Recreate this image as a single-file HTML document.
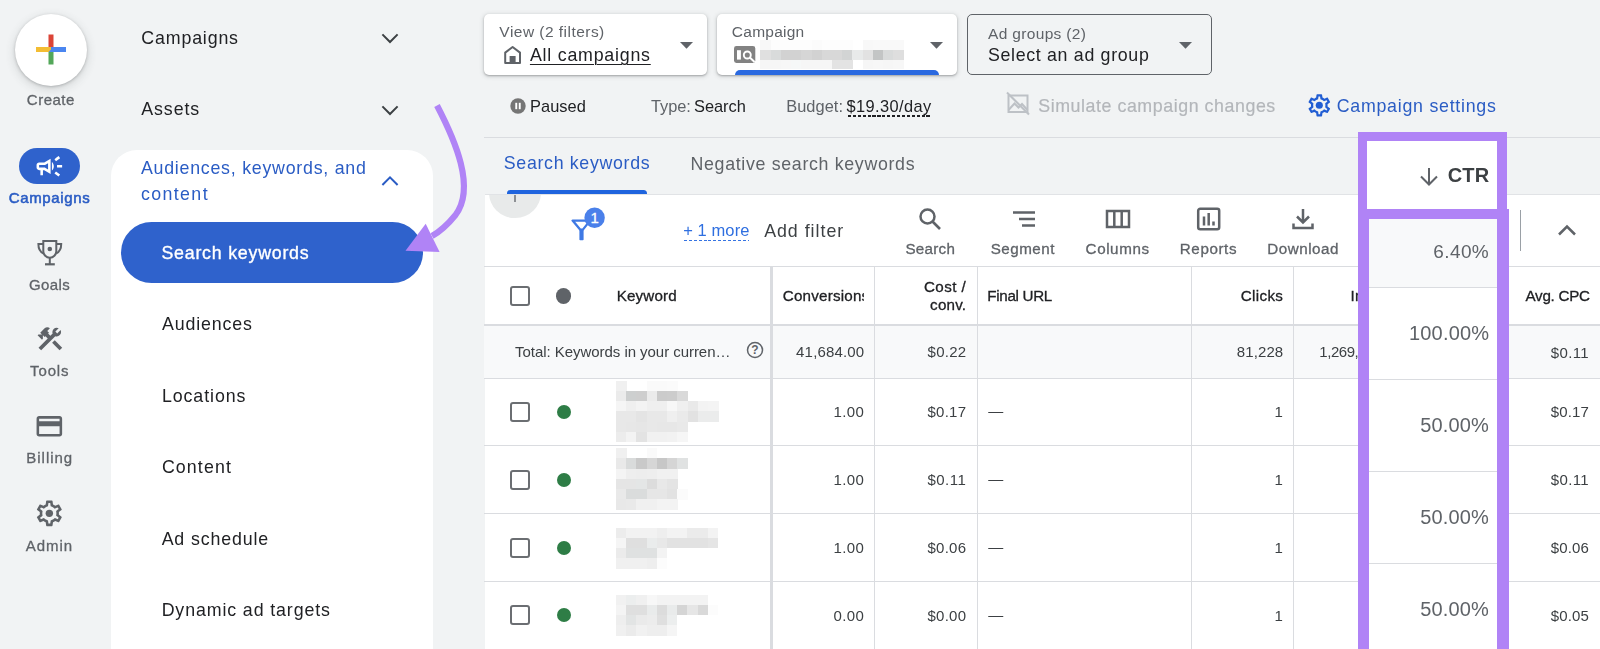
<!DOCTYPE html>
<html><head><meta charset="utf-8">
<style>
*{box-sizing:border-box;margin:0;padding:0}
html,body{width:1600px;height:649px;overflow:hidden;background:#f1f3f4;font-family:"Liberation Sans",sans-serif;color:#202124}
.abs{position:absolute}
#root{position:relative;width:1600px;height:649px;overflow:hidden;background:#f1f3f4}
.t{position:absolute;white-space:nowrap;line-height:1}
/* rail */
.rail-l{position:absolute;left:0;width:100px;text-align:center;font-size:15px;color:#5f6368;letter-spacing:.3px;line-height:1}
/* nav */
.nav{position:absolute;font-size:17.5px;color:#202124;letter-spacing:.35px;line-height:1;white-space:nowrap}
/* table */
.hl{position:absolute;height:1px;background:#dadce0}
.vl{position:absolute;width:1px;background:#dadce0}
.cell{position:absolute;font-size:14px;color:#3c4043;line-height:1;white-space:nowrap}
.r{text-align:right}
.hd{position:absolute;font-size:14px;color:#202124;line-height:1;white-space:nowrap;font-weight:bold}
.cb{position:absolute;width:20px;height:20px;border:2.4px solid #6b6e72;border-radius:3px;background:#fff}
.dot{position:absolute;width:14px;height:14px;border-radius:50%;background:#2e7d46}
.tb{position:absolute;font-size:14.5px;color:#5f6368;line-height:1;text-align:center;letter-spacing:.4px}
.blur{position:absolute;background:#ececec}
</style></head><body><div id="root">

<!-- LEFT RAIL -->
<div class="abs" style="left:15px;top:14px;width:72px;height:72px;border-radius:50%;background:#fff;box-shadow:0 1px 3px rgba(60,64,67,.3),0 3px 8px 2px rgba(60,64,67,.12)"></div>
<svg class="abs" style="left:36px;top:34px" width="30" height="31" viewBox="0 0 30 31">
 <rect x="12.5" y="0.5" width="5" height="15" fill="#db4437"/>
 <rect x="12.5" y="15.5" width="5" height="15" fill="#53a759"/>
 <rect x="0" y="13" width="15" height="5" fill="#f3bd33"/>
 <rect x="15" y="13" width="15" height="5" fill="#4a86f0"/>
 <path d="M12.5 18 L17.5 13 L17.5 18 Z" fill="#4a86f0"/>
</svg>

<div class="abs" style="left:19px;top:148px;width:61px;height:36px;border-radius:18px;background:#2f62cc"></div>

<!-- SECOND NAV -->
<div class="abs" style="left:111px;top:150px;width:322px;height:520px;background:#fff;border-radius:26px 26px 0 0"></div>
<div class="abs" style="left:121px;top:222px;width:302px;height:61px;border-radius:31px;background:#2f62cc"></div>


<!-- TOP SELECTORS -->
<div class="abs" style="left:484px;top:14px;width:223px;height:61px;background:#fff;border-radius:5px;box-shadow:0 1px 2px rgba(60,64,67,.35),0 1px 4px 1px rgba(60,64,67,.15)"></div>
<div class="abs" style="left:717px;top:14px;width:240px;height:61px;background:#fff;border-radius:5px;box-shadow:0 1px 2px rgba(60,64,67,.35),0 1px 4px 1px rgba(60,64,67,.15);overflow:hidden"><div class="abs" style="left:18px;top:56.3px;width:203.5px;height:10px;border-radius:5px;background:#2a69e0"></div></div>
<div class="abs" style="left:967px;top:14px;width:245px;height:61px;border:1px solid #5f6368;border-radius:5px"></div>

<!-- ICONS -->
<svg class="abs" style="left:34.4px;top:150.7px" width="30.7" height="30.7" viewBox="0 0 24 24"><path d="M18 11v2h4v-2h-4zM16 17.61c.96.71 2.21 1.65 3.2 2.39.4-.53.8-1.07 1.2-1.6-.99-.74-2.24-1.68-3.2-2.4-.4.54-.8 1.08-1.2 1.61zM20.4 5.6c-.4-.53-.8-1.07-1.2-1.6-.99.74-2.24 1.68-3.2 2.4.4.53.8 1.07 1.2 1.6.96-.72 2.21-1.65 3.2-2.4zM4 9c-1.1 0-2 .9-2 2v2c0 1.1.9 2 2 2h1v4h2v-4h1l5 3V6L8 9H4zm5.03 1.71L11 9.53v4.94l-1.97-1.18-.48-.29H4v-2h4.55l.48-.29zM15.5 12c0-1.33-.58-2.53-1.5-3.35v6.69c.92-.81 1.5-2.01 1.5-3.34z" fill="#fff"/></svg>
<svg class="abs" style="left:36px;top:239px" width="28" height="28" viewBox="0 0 28 28" fill="none" stroke="#5f6368" stroke-width="2"><path d="M7.3 2.1H20.3V12.2a6.5 6.5 0 0 1 -13 0Z"/><path d="M13.8 18.7V25.3"/><path d="M9 25.3H18.8" stroke-width="2.2"/><path d="M7.3 5H2.4C2.4 9.2 4 12.8 7.3 14.3"/><path d="M20.3 5H25.2C25.2 9.2 23.6 12.8 20.3 14.3"/><circle cx="13.8" cy="10" r="2.3" fill="#5f6368" stroke="none"/></svg>
<svg class="abs" style="left:34.6px;top:324.4px" width="29.8" height="29.8" viewBox="0 0 24 24" fill="#5f6368"><rect height="8.48" transform="matrix(0.7071 -0.7071 0.7071 0.7071 -6.8717 17.6255)" width="3" x="16.34" y="12.87"/><path d="M17.5,10c1.93,0,3.5-1.57,3.5-3.5c0-0.58-0.16-1.12-0.41-1.6l-2.7,2.7L16.4,6.11l2.7-2.7C18.62,3.16,18.08,3,17.5,3 C15.57,3,14,4.57,14,6.5c0,0.41,0.08,0.8,0.21,1.16l-1.85,1.85l-1.78-1.78l0.71-0.71L9.88,5.61L12,3.49 c-1.17-1.17-3.07-1.17-4.24,0L4.22,7.03l1.41,1.41H2.81L2.1,9.15l3.54,3.54l0.71-0.71V9.15l1.41,1.41l0.71-0.71l1.78,1.78 l-7.41,7.41l2.12,2.12L16.34,9.79C16.7,9.92,17.09,10,17.5,10z"/></svg>
<svg class="abs" style="left:34.4px;top:411px" width="30.7" height="30.7" viewBox="0 0 24 24"><path d="M20 4H4c-1.11 0-1.99.89-1.99 2L2 18c0 1.11.89 2 2 2h16c1.11 0 2-.89 2-2V6c0-1.11-.89-2-2-2zm0 14H4v-6h16v6zm0-10H4V6h16v2z" fill="#5f6368"/></svg>
<svg class="abs" style="left:34.4px;top:498px" width="30.7" height="30.7" viewBox="0 0 24 24"><path d="M19.43 12.98c.04-.32.07-.64.07-.98 0-.34-.03-.66-.07-.98l2.11-1.65c.19-.15.24-.42.12-.64l-2-3.46c-.09-.16-.26-.25-.44-.25-.06 0-.12.01-.17.03l-2.49 1c-.52-.4-1.08-.73-1.69-.98l-.38-2.65C14.46 2.18 14.25 2 14 2h-4c-.25 0-.46.18-.49.42l-.38 2.65c-.61.25-1.17.59-1.69.98l-2.49-1c-.06-.02-.12-.03-.18-.03-.17 0-.34.09-.43.25l-2 3.46c-.13.22-.07.49.12.64l2.11 1.65c-.04.32-.07.65-.07.98 0 .33.03.66.07.98l-2.11 1.65c-.19.15-.24.42-.12.64l2 3.46c.09.16.26.25.44.25.06 0 .12-.01.17-.03l2.49-1c.52.4 1.08.73 1.69.98l.38 2.65c.03.24.24.42.49.42h4c.25 0 .46-.18.49-.42l.38-2.65c.61-.25 1.17-.59 1.69-.98l2.49 1c.06.02.12.03.18.03.17 0 .34-.09.43-.25l2-3.46c.12-.22.07-.49-.12-.64l-2.11-1.65zm-1.98-1.71c.04.31.05.52.05.73 0 .21-.02.43-.05.73l-.14 1.13.89.7 1.08.84-.7 1.21-1.27-.51-1.04-.42-.9.68c-.43.32-.84.56-1.25.73l-1.06.43-.16 1.13-.2 1.35h-1.4l-.19-1.35-.16-1.13-1.06-.43c-.43-.18-.83-.41-1.23-.71l-.91-.7-1.06.43-1.27.51-.7-1.21 1.08-.84.89-.7-.14-1.13c-.03-.31-.05-.54-.05-.74s.02-.43.05-.73l.14-1.13-.89-.7-1.08-.84.7-1.21 1.27.51 1.04.42.9-.68c.43-.32.84-.56 1.25-.73l1.06-.43.16-1.13.2-1.35h1.39l.19 1.35.16 1.13 1.06.43c.43.18.83.41 1.23.71l.91.7 1.06-.43 1.27-.51.7 1.21-1.07.85-.89.7.14 1.13z" fill="#5f6368"/><circle cx="12" cy="12" r="2.9" fill="#5f6368"/></svg>
<!-- chevrons -->
<svg class="abs" style="left:379px;top:30px" width="22" height="16" viewBox="0 0 22 16"><path d="M3.4 4.4L11 12L18.6 4.4" fill="none" stroke="#3c4043" stroke-width="2"/></svg>
<svg class="abs" style="left:379px;top:101.6px" width="22" height="16" viewBox="0 0 22 16"><path d="M3.4 4.4L11 12L18.6 4.4" fill="none" stroke="#3c4043" stroke-width="2"/></svg>
<svg class="abs" style="left:379px;top:173px" width="22" height="16" viewBox="0 0 22 16"><path d="M3.4 12L11 4.4L18.6 12" fill="none" stroke="#2a5cc4" stroke-width="2"/></svg>
<!-- purple arrow -->
<svg class="abs" style="left:390px;top:95px" width="100" height="170" viewBox="390 95 100 170"><path d="M437 105.5 C455 140 476 188 455.5 215 C449 223 441 231 432 236" fill="none" stroke="#b083f6" stroke-width="6.2" stroke-linecap="butt"/><path d="M405.5 250.7L425.7 223.8L439.6 252.1Z" fill="#b083f6"/></svg>
<!-- selector icons -->
<svg class="abs" style="left:502px;top:44px" width="22" height="22" viewBox="0 0 22 22"><path d="M3.2 19V8.6L10.6 3L18 8.6V19H3.2Z" fill="none" stroke="#5f6368" stroke-width="2" stroke-linejoin="round"/><rect x="7.6" y="12" width="6" height="7" fill="#5f6368"/></svg>
<svg class="abs" style="left:679.5px;top:41.8px" width="13" height="7"><path d="M0 0H13L6.5 6.8Z" fill="#5f6368"/></svg>
<svg class="abs" style="left:930px;top:41.8px" width="13" height="7"><path d="M0 0H13L6.5 6.8Z" fill="#5f6368"/></svg>
<svg class="abs" style="left:1179px;top:41.8px" width="13" height="7"><path d="M0 0H13L6.5 6.8Z" fill="#5f6368"/></svg>
<svg class="abs" style="left:734.3px;top:46.3px" width="22" height="18" viewBox="0 0 22 18"><rect x="0" y="0" width="21.3" height="17" rx="2.4" fill="#828282"/><rect x="3" y="4.2" width="3.9" height="9.4" fill="#fff"/><circle cx="13.3" cy="9" r="3.5" fill="none" stroke="#fff" stroke-width="1.9"/><path d="M15.8 11.6L20.6 16" stroke="#fff" stroke-width="2"/></svg>
<!-- blurred campaign name -->
<div class="blur" style="left:760.4px;top:40.0px;width:10.5px;height:10.4px;background:#f8f8f8"></div><div class="blur" style="left:770.6px;top:40.0px;width:10.5px;height:10.4px;background:#fdfdfd"></div><div class="blur" style="left:780.8px;top:40.0px;width:10.5px;height:10.4px;background:#fdfdfd"></div><div class="blur" style="left:791.1px;top:40.0px;width:10.5px;height:10.4px;background:#fdfdfd"></div><div class="blur" style="left:801.3px;top:40.0px;width:10.5px;height:10.4px;background:#fdfdfd"></div><div class="blur" style="left:811.5px;top:40.0px;width:10.5px;height:10.4px;background:#fbfbfb"></div><div class="blur" style="left:821.7px;top:40.0px;width:10.5px;height:10.4px;background:#fdfdfd"></div><div class="blur" style="left:831.9px;top:40.0px;width:10.5px;height:10.4px;background:#fdfdfd"></div><div class="blur" style="left:842.2px;top:40.0px;width:10.5px;height:10.4px;background:#fdfdfd"></div><div class="blur" style="left:862.6px;top:40.0px;width:10.5px;height:10.4px;background:#f8f8f8"></div><div class="blur" style="left:872.8px;top:40.0px;width:10.5px;height:10.4px;background:#f9f9f9"></div><div class="blur" style="left:883.0px;top:40.0px;width:10.5px;height:10.4px;background:#f9f9f9"></div><div class="blur" style="left:893.3px;top:40.0px;width:10.5px;height:10.4px;background:#f9f9f9"></div><div class="blur" style="left:760.4px;top:50.1px;width:10.5px;height:10.4px;background:#e0e0e0"></div><div class="blur" style="left:770.6px;top:50.1px;width:10.5px;height:10.4px;background:#d9dbdb"></div><div class="blur" style="left:780.8px;top:50.1px;width:10.5px;height:10.4px;background:#d2d2d2"></div><div class="blur" style="left:791.1px;top:50.1px;width:10.5px;height:10.4px;background:#d2d2d2"></div><div class="blur" style="left:801.3px;top:50.1px;width:10.5px;height:10.4px;background:#d6d6d6"></div><div class="blur" style="left:811.5px;top:50.1px;width:10.5px;height:10.4px;background:#d2d2d2"></div><div class="blur" style="left:821.7px;top:50.1px;width:10.5px;height:10.4px;background:#d8d8d8"></div><div class="blur" style="left:831.9px;top:50.1px;width:10.5px;height:10.4px;background:#d8d8d8"></div><div class="blur" style="left:842.2px;top:50.1px;width:10.5px;height:10.4px;background:#d2d4d4"></div><div class="blur" style="left:852.4px;top:50.1px;width:10.5px;height:10.4px;background:#e8eaea"></div><div class="blur" style="left:862.6px;top:50.1px;width:10.5px;height:10.4px;background:#e2e2e2"></div><div class="blur" style="left:872.8px;top:50.1px;width:10.5px;height:10.4px;background:#c3c5c5"></div><div class="blur" style="left:883.0px;top:50.1px;width:10.5px;height:10.4px;background:#d9dbdb"></div><div class="blur" style="left:893.3px;top:50.1px;width:10.5px;height:10.4px;background:#dedede"></div><div class="blur" style="left:760.4px;top:60.2px;width:10.5px;height:8.5px;background:#f6f6f6"></div><div class="blur" style="left:770.6px;top:60.2px;width:10.5px;height:8.5px;background:#f6f6f6"></div><div class="blur" style="left:780.8px;top:60.2px;width:10.5px;height:8.5px;background:#f7f7f7"></div><div class="blur" style="left:791.1px;top:60.2px;width:10.5px;height:8.5px;background:#f6f8f8"></div><div class="blur" style="left:801.3px;top:60.2px;width:10.5px;height:8.5px;background:#f6f6f6"></div><div class="blur" style="left:811.5px;top:60.2px;width:10.5px;height:8.5px;background:#f6f6f6"></div><div class="blur" style="left:821.7px;top:60.2px;width:10.5px;height:8.5px;background:#f6f6f6"></div><div class="blur" style="left:831.9px;top:60.2px;width:10.5px;height:8.5px;background:#e3e3e3"></div><div class="blur" style="left:842.2px;top:60.2px;width:10.5px;height:8.5px;background:#e3e3e3"></div><div class="blur" style="left:862.6px;top:60.2px;width:10.5px;height:8.5px;background:#f6f6f6"></div><div class="blur" style="left:872.8px;top:60.2px;width:10.5px;height:8.5px;background:#f7f7f7"></div><div class="blur" style="left:883.0px;top:60.2px;width:10.5px;height:8.5px;background:#f6f6f6"></div><div class="blur" style="left:893.3px;top:60.2px;width:10.5px;height:8.5px;background:#f7f7f7"></div>
<!-- pause -->
<svg class="abs" style="left:509.5px;top:98px" width="16" height="16" viewBox="0 0 16 16"><circle cx="8" cy="8" r="7.7" fill="#757575"/><rect x="5.3" y="4.8" width="1.9" height="6.4" fill="#fff"/><rect x="8.8" y="4.8" width="1.9" height="6.4" fill="#fff"/></svg>
<!-- simulate icon -->
<svg class="abs" style="left:1005px;top:91px" width="26" height="26" viewBox="0 0 26 26" fill="none" stroke="#bdc1c6" stroke-width="2"><path d="M3.5 4.5H22.5V21H3.5Z"/><path d="M2 1.5L24 23.5"/><path d="M3.5 19L9.5 12.5L13.5 16.5L17 13L22.5 19"/></svg>
<!-- blue gear -->
<svg class="abs" style="left:1305.6px;top:92.3px" width="26.6" height="26.6" viewBox="0 0 24 24"><path d="M19.43 12.98c.04-.32.07-.64.07-.98 0-.34-.03-.66-.07-.98l2.11-1.65c.19-.15.24-.42.12-.64l-2-3.46c-.09-.16-.26-.25-.44-.25-.06 0-.12.01-.17.03l-2.49 1c-.52-.4-1.08-.73-1.69-.98l-.38-2.65C14.46 2.18 14.25 2 14 2h-4c-.25 0-.46.18-.49.42l-.38 2.65c-.61.25-1.17.59-1.69.98l-2.49-1c-.06-.02-.12-.03-.18-.03-.17 0-.34.09-.43.25l-2 3.46c-.13.22-.07.49.12.64l2.11 1.65c-.04.32-.07.65-.07.98 0 .33.03.66.07.98l-2.11 1.65c-.19.15-.24.42-.12.64l2 3.46c.09.16.26.25.44.25.06 0 .12-.01.17-.03l2.49-1c.52.4 1.08.73 1.69.98l.38 2.65c.03.24.24.42.49.42h4c.25 0 .46-.18.49-.42l.38-2.65c.61-.25 1.17-.59 1.69-.98l2.49 1c.06.02.12.03.18.03.17 0 .34-.09.43-.25l2-3.46c.12-.22.07-.49-.12-.64l-2.11-1.65zm-1.98-1.71c.04.31.05.52.05.73 0 .21-.02.43-.05.73l-.14 1.13.89.7 1.08.84-.7 1.21-1.27-.51-1.04-.42-.9.68c-.43.32-.84.56-1.25.73l-1.06.43-.16 1.13-.2 1.35h-1.4l-.19-1.35-.16-1.13-1.06-.43c-.43-.18-.83-.41-1.23-.71l-.91-.7-1.06.43-1.27.51-.7-1.21 1.08-.84.89-.7-.14-1.13c-.03-.31-.05-.54-.05-.74s.02-.43.05-.73l.14-1.13-.89-.7-1.08-.84.7-1.21 1.27.51 1.04.42.9-.68c.43-.32.84-.56 1.25-.73l1.06-.43.16-1.13.2-1.35h1.39l.19 1.35.16 1.13 1.06.43c.43.18.83.41 1.23.71l.91.7 1.06-.43 1.27-.51.7 1.21-1.07.85-.89.7.14 1.13z" fill="#215dd3"/><circle cx="12" cy="12" r="3.2" fill="#215dd3"/></svg>


<!-- STATUS ROW -->
<div class="hl" style="left:484px;top:137px;width:1116px;background:#dadce0"></div>

<!-- TABS -->
<div class="abs" style="left:507.2px;top:189.8px;width:139.7px;height:4px;border-radius:3.5px 3.5px 0 0;background:#1f64de"></div>

<!-- TABLE AREA -->
<div class="abs" style="left:484.5px;top:193.5px;width:1116px;height:456px;background:#fff;border-top:1.2px solid #e1e3e6"></div>


<!-- grey circle peeking at top-left of table -->
<div class="abs" style="left:484.5px;top:194.7px;width:80px;height:30px;overflow:hidden"><div class="abs" style="left:4.9px;top:-28.2px;width:51.2px;height:51.2px;border-radius:50%;background:#e8eaea"></div><div class="abs" style="left:29.5px;top:0;width:2.2px;height:7.5px;background:#8d9094"></div></div>

<!-- toolbar -->
<svg class="abs" style="left:571.2px;top:206px" width="36" height="36" viewBox="0 0 36 36"><path d="M1.6 14.6 H19 L11.9 23.6 H9.1 Z" fill="none" stroke="#3f79e4" stroke-width="2.3" stroke-linejoin="round"/><rect x="8.4" y="23" width="4.2" height="11.2" rx="0.8" fill="#3f79e4"/><circle cx="23.6" cy="11.7" r="10.2" fill="#4a80ea"/><text x="23.6" y="17" font-family="Liberation Sans" font-size="15" fill="#fff" text-anchor="middle" stroke="#fff" stroke-width=".3">1</text></svg>

<svg class="abs" style="left:918px;top:207px" width="24" height="24" viewBox="0 0 24 24"><circle cx="9.5" cy="9.5" r="7" fill="none" stroke="#5f6368" stroke-width="2.5"/><path d="M14.5 14.5 L22 22" stroke="#5f6368" stroke-width="2.6"/></svg>
<svg class="abs" style="left:1011.7px;top:209px" width="24" height="20" viewBox="0 0 24 20"><path d="M1 3.5H23 M7 10H23 M10 16.5H23" stroke="#5f6368" stroke-width="2.5"/></svg>
<svg class="abs" style="left:1105px;top:208px" width="26" height="22" viewBox="0 0 26 22"><rect x="2" y="3" width="22" height="16" fill="none" stroke="#5f6368" stroke-width="2.5"/><path d="M9.3 3V19 M16.7 3V19" stroke="#5f6368" stroke-width="2.5"/></svg>
<svg class="abs" style="left:1196px;top:206px" width="26" height="26" viewBox="0 0 26 26"><rect x="2.2" y="2.8" width="21" height="20.5" rx="2" fill="none" stroke="#5f6368" stroke-width="2.5"/><path d="M8 10.5V19.6 M12.7 7V19.6 M17.5 15.6V19.6" stroke="#5f6368" stroke-width="2.5"/></svg>
<svg class="abs" style="left:1291px;top:207px" width="24" height="24" viewBox="0 0 24 24"><path d="M12 2V15 M6 9.5L12 15.5L18 9.5" fill="none" stroke="#5f6368" stroke-width="2.5"/><path d="M2.5 16.5V21H21.5V16.5" fill="none" stroke="#5f6368" stroke-width="2.5"/></svg>

<!-- total row bg -->
<div class="abs" style="left:484px;top:325px;width:1116px;height:53px;background:#f8f9fa"></div>
<!-- horizontal lines -->
<div class="hl" style="left:484px;top:266px;width:1116px"></div>
<div class="hl" style="left:484px;top:324px;width:1116px;height:2px"></div>
<div class="hl" style="left:484px;top:377.6px;width:1116px;height:1.3px"></div>
<div class="hl" style="left:484px;top:445px;width:1116px"></div>
<div class="hl" style="left:484px;top:513px;width:1116px"></div>
<div class="hl" style="left:484px;top:581px;width:1116px"></div>
<!-- vertical lines -->
<div class="vl" style="left:770px;top:267px;height:382px;width:3px;background:#dadce0"></div>
<div class="vl" style="left:874px;top:267px;height:382px"></div>
<div class="vl" style="left:977px;top:267px;height:382px"></div>
<div class="vl" style="left:1191px;top:267px;height:382px"></div>
<div class="vl" style="left:1293px;top:267px;height:382px"></div>

<!-- header -->
<div class="cb" style="left:510.2px;top:285.8px"></div>
<div class="abs" style="left:555.9px;top:288.2px;width:15.4px;height:15.4px;border-radius:50%;background:#5f6368"></div>

<!-- total row -->
<svg class="abs" style="left:746px;top:341px" width="18" height="18" viewBox="0 0 18 18"><circle cx="9" cy="9" r="7.5" fill="none" stroke="#5f6368" stroke-width="1.5"/><text x="9" y="13.3" font-family="Liberation Sans" font-size="12" font-weight="bold" fill="#5f6368" text-anchor="middle">?</text></svg>

<div class="cb" style="left:510.2px;top:402px"></div>
<div class="dot" style="left:556.6px;top:405px"></div>
<div class="cb" style="left:510.2px;top:470px"></div>
<div class="dot" style="left:556.6px;top:473px"></div>
<div class="cb" style="left:510.2px;top:537.5px"></div>
<div class="dot" style="left:556.6px;top:540.5px"></div>
<div class="cb" style="left:510.2px;top:605.2px"></div>
<div class="dot" style="left:556.6px;top:608.2px"></div>
<!-- blurred keywords -->
<div class="blur" style="left:616.0px;top:380.7px;width:10.5px;height:10.5px;background:#f0f0f0"></div><div class="blur" style="left:646.7px;top:380.7px;width:10.5px;height:10.5px;background:#fafafa"></div><div class="blur" style="left:656.9px;top:380.7px;width:10.5px;height:10.5px;background:#fafafa"></div><div class="blur" style="left:667.1px;top:380.7px;width:10.5px;height:10.5px;background:#fbfbfb"></div><div class="blur" style="left:616.0px;top:390.9px;width:10.5px;height:10.5px;background:#ebebeb"></div><div class="blur" style="left:626.2px;top:390.9px;width:10.5px;height:10.5px;background:#cdcfcf"></div><div class="blur" style="left:636.4px;top:390.9px;width:10.5px;height:10.5px;background:#cecece"></div><div class="blur" style="left:646.7px;top:390.9px;width:10.5px;height:10.5px;background:#ebebeb"></div><div class="blur" style="left:656.9px;top:390.9px;width:10.5px;height:10.5px;background:#cbcbcb"></div><div class="blur" style="left:667.1px;top:390.9px;width:10.5px;height:10.5px;background:#cccccc"></div><div class="blur" style="left:677.3px;top:390.9px;width:10.5px;height:10.5px;background:#d9d9d9"></div><div class="blur" style="left:616.0px;top:401.1px;width:10.5px;height:10.5px;background:#f5f5f5"></div><div class="blur" style="left:626.2px;top:401.1px;width:10.5px;height:10.5px;background:#efefef"></div><div class="blur" style="left:636.4px;top:401.1px;width:10.5px;height:10.5px;background:#f3f3f3"></div><div class="blur" style="left:646.7px;top:401.1px;width:10.5px;height:10.5px;background:#efefef"></div><div class="blur" style="left:656.9px;top:401.1px;width:10.5px;height:10.5px;background:#efefef"></div><div class="blur" style="left:667.1px;top:401.1px;width:10.5px;height:10.5px;background:#f7f7f7"></div><div class="blur" style="left:677.3px;top:401.1px;width:10.5px;height:10.5px;background:#efefef"></div><div class="blur" style="left:687.5px;top:401.1px;width:10.5px;height:10.5px;background:#e9e9e9"></div><div class="blur" style="left:697.8px;top:401.1px;width:10.5px;height:10.5px;background:#f3f3f3"></div><div class="blur" style="left:708.0px;top:401.1px;width:10.5px;height:10.5px;background:#f4f4f4"></div><div class="blur" style="left:616.0px;top:411.4px;width:10.5px;height:10.5px;background:#e8e8e8"></div><div class="blur" style="left:626.2px;top:411.4px;width:10.5px;height:10.5px;background:#e8e8e8"></div><div class="blur" style="left:636.4px;top:411.4px;width:10.5px;height:10.5px;background:#e4e4e4"></div><div class="blur" style="left:646.7px;top:411.4px;width:10.5px;height:10.5px;background:#e8e8e8"></div><div class="blur" style="left:656.9px;top:411.4px;width:10.5px;height:10.5px;background:#e8e8e8"></div><div class="blur" style="left:667.1px;top:411.4px;width:10.5px;height:10.5px;background:#efefef"></div><div class="blur" style="left:677.3px;top:411.4px;width:10.5px;height:10.5px;background:#eaeaea"></div><div class="blur" style="left:687.5px;top:411.4px;width:10.5px;height:10.5px;background:#e2e2e2"></div><div class="blur" style="left:697.8px;top:411.4px;width:10.5px;height:10.5px;background:#ebecec"></div><div class="blur" style="left:708.0px;top:411.4px;width:10.5px;height:10.5px;background:#ebecec"></div><div class="blur" style="left:616.0px;top:421.6px;width:10.5px;height:10.5px;background:#e8e8e8"></div><div class="blur" style="left:626.2px;top:421.6px;width:10.5px;height:10.5px;background:#e7e7e7"></div><div class="blur" style="left:636.4px;top:421.6px;width:10.5px;height:10.5px;background:#e6e6e6"></div><div class="blur" style="left:646.7px;top:421.6px;width:10.5px;height:10.5px;background:#e8e8e8"></div><div class="blur" style="left:656.9px;top:421.6px;width:10.5px;height:10.5px;background:#e7e7e7"></div><div class="blur" style="left:667.1px;top:421.6px;width:10.5px;height:10.5px;background:#e7e7e7"></div><div class="blur" style="left:677.3px;top:421.6px;width:10.5px;height:10.5px;background:#e9e9e9"></div><div class="blur" style="left:616.0px;top:431.8px;width:10.5px;height:10.5px;background:#ececec"></div><div class="blur" style="left:626.2px;top:431.8px;width:10.5px;height:10.5px;background:#f3f3f3"></div><div class="blur" style="left:636.4px;top:431.8px;width:10.5px;height:10.5px;background:#e3e3e3"></div><div class="blur" style="left:646.7px;top:431.8px;width:10.5px;height:10.5px;background:#f1f1f1"></div><div class="blur" style="left:656.9px;top:431.8px;width:10.5px;height:10.5px;background:#f1f1f1"></div><div class="blur" style="left:667.1px;top:431.8px;width:10.5px;height:10.5px;background:#f2f2f2"></div><div class="blur" style="left:677.3px;top:431.8px;width:10.5px;height:10.5px;background:#f6f6f6"></div>
<div class="blur" style="left:616.0px;top:448.2px;width:10.5px;height:10.5px;background:#f0f0f0"></div><div class="blur" style="left:646.7px;top:448.2px;width:10.5px;height:10.5px;background:#fafafa"></div><div class="blur" style="left:616.0px;top:458.4px;width:10.5px;height:10.5px;background:#e9e9e9"></div><div class="blur" style="left:626.2px;top:458.4px;width:10.5px;height:10.5px;background:#d9dbdb"></div><div class="blur" style="left:636.4px;top:458.4px;width:10.5px;height:10.5px;background:#c9c9c9"></div><div class="blur" style="left:646.7px;top:458.4px;width:10.5px;height:10.5px;background:#d6d6d6"></div><div class="blur" style="left:656.9px;top:458.4px;width:10.5px;height:10.5px;background:#c7c7c7"></div><div class="blur" style="left:667.1px;top:458.4px;width:10.5px;height:10.5px;background:#d5d5d5"></div><div class="blur" style="left:677.3px;top:458.4px;width:10.5px;height:10.5px;background:#e0e2e2"></div><div class="blur" style="left:616.0px;top:468.6px;width:10.5px;height:10.5px;background:#f4f4f4"></div><div class="blur" style="left:626.2px;top:468.6px;width:10.5px;height:10.5px;background:#eeeeee"></div><div class="blur" style="left:636.4px;top:468.6px;width:10.5px;height:10.5px;background:#ededed"></div><div class="blur" style="left:646.7px;top:468.6px;width:10.5px;height:10.5px;background:#eeeeee"></div><div class="blur" style="left:656.9px;top:468.6px;width:10.5px;height:10.5px;background:#f1f1f1"></div><div class="blur" style="left:667.1px;top:468.6px;width:10.5px;height:10.5px;background:#f1f1f1"></div><div class="blur" style="left:616.0px;top:478.9px;width:10.5px;height:10.5px;background:#e5e5e5"></div><div class="blur" style="left:626.2px;top:478.9px;width:10.5px;height:10.5px;background:#e5e5e5"></div><div class="blur" style="left:636.4px;top:478.9px;width:10.5px;height:10.5px;background:#e4e6e6"></div><div class="blur" style="left:646.7px;top:478.9px;width:10.5px;height:10.5px;background:#dcdcdc"></div><div class="blur" style="left:656.9px;top:478.9px;width:10.5px;height:10.5px;background:#e8e8e8"></div><div class="blur" style="left:667.1px;top:478.9px;width:10.5px;height:10.5px;background:#e4e4e4"></div><div class="blur" style="left:616.0px;top:489.1px;width:10.5px;height:10.5px;background:#e9e9e9"></div><div class="blur" style="left:626.2px;top:489.1px;width:10.5px;height:10.5px;background:#dadcdc"></div><div class="blur" style="left:636.4px;top:489.1px;width:10.5px;height:10.5px;background:#dadcdc"></div><div class="blur" style="left:646.7px;top:489.1px;width:10.5px;height:10.5px;background:#e6e6e6"></div><div class="blur" style="left:656.9px;top:489.1px;width:10.5px;height:10.5px;background:#e6e6e6"></div><div class="blur" style="left:667.1px;top:489.1px;width:10.5px;height:10.5px;background:#e2e2e2"></div><div class="blur" style="left:677.3px;top:489.1px;width:10.5px;height:10.5px;background:#fbfbfb"></div><div class="blur" style="left:616.0px;top:499.3px;width:10.5px;height:10.5px;background:#e8e8e8"></div><div class="blur" style="left:626.2px;top:499.3px;width:10.5px;height:10.5px;background:#e9e9e9"></div><div class="blur" style="left:636.4px;top:499.3px;width:10.5px;height:10.5px;background:#f0f0f0"></div><div class="blur" style="left:646.7px;top:499.3px;width:10.5px;height:10.5px;background:#f0f0f0"></div><div class="blur" style="left:656.9px;top:499.3px;width:10.5px;height:10.5px;background:#f3f3f3"></div><div class="blur" style="left:667.1px;top:499.3px;width:10.5px;height:10.5px;background:#f3f3f3"></div>
<div class="blur" style="left:615.8px;top:527.7px;width:10.5px;height:10.5px;background:#ececec"></div><div class="blur" style="left:626.0px;top:527.7px;width:10.5px;height:10.5px;background:#f2f2f2"></div><div class="blur" style="left:636.2px;top:527.7px;width:10.5px;height:10.5px;background:#f2f2f2"></div><div class="blur" style="left:646.5px;top:527.7px;width:10.5px;height:10.5px;background:#f2f2f2"></div><div class="blur" style="left:656.7px;top:527.7px;width:10.5px;height:10.5px;background:#eeeeee"></div><div class="blur" style="left:666.9px;top:527.7px;width:10.5px;height:10.5px;background:#f3f3f3"></div><div class="blur" style="left:677.1px;top:527.7px;width:10.5px;height:10.5px;background:#f3f3f3"></div><div class="blur" style="left:687.3px;top:527.7px;width:10.5px;height:10.5px;background:#ebebeb"></div><div class="blur" style="left:697.6px;top:527.7px;width:10.5px;height:10.5px;background:#ebebeb"></div><div class="blur" style="left:707.8px;top:527.7px;width:10.5px;height:10.5px;background:#f3f3f3"></div><div class="blur" style="left:615.8px;top:537.9px;width:10.5px;height:10.5px;background:#f5f5f5"></div><div class="blur" style="left:626.0px;top:537.9px;width:10.5px;height:10.5px;background:#dfdfdf"></div><div class="blur" style="left:636.2px;top:537.9px;width:10.5px;height:10.5px;background:#dfdfdf"></div><div class="blur" style="left:646.5px;top:537.9px;width:10.5px;height:10.5px;background:#eaecec"></div><div class="blur" style="left:656.7px;top:537.9px;width:10.5px;height:10.5px;background:#e8e8e8"></div><div class="blur" style="left:666.9px;top:537.9px;width:10.5px;height:10.5px;background:#e2e2e2"></div><div class="blur" style="left:677.1px;top:537.9px;width:10.5px;height:10.5px;background:#e2e2e2"></div><div class="blur" style="left:687.3px;top:537.9px;width:10.5px;height:10.5px;background:#e2e2e2"></div><div class="blur" style="left:697.6px;top:537.9px;width:10.5px;height:10.5px;background:#e2e2e2"></div><div class="blur" style="left:707.8px;top:537.9px;width:10.5px;height:10.5px;background:#e5e5e5"></div><div class="blur" style="left:615.8px;top:548.1px;width:10.5px;height:10.5px;background:#ebebeb"></div><div class="blur" style="left:626.0px;top:548.1px;width:10.5px;height:10.5px;background:#dfe1e1"></div><div class="blur" style="left:636.2px;top:548.1px;width:10.5px;height:10.5px;background:#dfe1e1"></div><div class="blur" style="left:646.5px;top:548.1px;width:10.5px;height:10.5px;background:#dfe1e1"></div><div class="blur" style="left:656.7px;top:548.1px;width:10.5px;height:10.5px;background:#f3f3f3"></div><div class="blur" style="left:615.8px;top:558.4px;width:10.5px;height:10.5px;background:#f0f0f0"></div><div class="blur" style="left:626.0px;top:558.4px;width:10.5px;height:10.5px;background:#f0f0f0"></div><div class="blur" style="left:636.2px;top:558.4px;width:10.5px;height:10.5px;background:#f0f0f0"></div><div class="blur" style="left:646.5px;top:558.4px;width:10.5px;height:10.5px;background:#eeeeee"></div><div class="blur" style="left:656.7px;top:558.4px;width:10.5px;height:10.5px;background:#fcfcfc"></div>
<div class="blur" style="left:615.8px;top:594.7px;width:10.5px;height:10.5px;background:#f1f1f1"></div><div class="blur" style="left:626.0px;top:594.7px;width:10.5px;height:10.5px;background:#eceeee"></div><div class="blur" style="left:636.2px;top:594.7px;width:10.5px;height:10.5px;background:#f0f0f0"></div><div class="blur" style="left:646.5px;top:594.7px;width:10.5px;height:10.5px;background:#f7f7f7"></div><div class="blur" style="left:656.7px;top:594.7px;width:10.5px;height:10.5px;background:#f3f3f3"></div><div class="blur" style="left:666.9px;top:594.7px;width:10.5px;height:10.5px;background:#f3f3f3"></div><div class="blur" style="left:677.1px;top:594.7px;width:10.5px;height:10.5px;background:#f3f3f3"></div><div class="blur" style="left:687.3px;top:594.7px;width:10.5px;height:10.5px;background:#f3f3f3"></div><div class="blur" style="left:697.6px;top:594.7px;width:10.5px;height:10.5px;background:#f3f3f3"></div><div class="blur" style="left:615.8px;top:604.9px;width:10.5px;height:10.5px;background:#f4f4f4"></div><div class="blur" style="left:626.0px;top:604.9px;width:10.5px;height:10.5px;background:#dfdfdf"></div><div class="blur" style="left:636.2px;top:604.9px;width:10.5px;height:10.5px;background:#dfdfdf"></div><div class="blur" style="left:646.5px;top:604.9px;width:10.5px;height:10.5px;background:#e9ebeb"></div><div class="blur" style="left:656.7px;top:604.9px;width:10.5px;height:10.5px;background:#dcdcdc"></div><div class="blur" style="left:666.9px;top:604.9px;width:10.5px;height:10.5px;background:#e9ebeb"></div><div class="blur" style="left:677.1px;top:604.9px;width:10.5px;height:10.5px;background:#d5d5d5"></div><div class="blur" style="left:687.3px;top:604.9px;width:10.5px;height:10.5px;background:#e6e6e6"></div><div class="blur" style="left:697.6px;top:604.9px;width:10.5px;height:10.5px;background:#d9d9d9"></div><div class="blur" style="left:707.8px;top:604.9px;width:10.5px;height:10.5px;background:#fcfcfc"></div><div class="blur" style="left:615.8px;top:615.1px;width:10.5px;height:10.5px;background:#eeeeee"></div><div class="blur" style="left:626.0px;top:615.1px;width:10.5px;height:10.5px;background:#e2e4e4"></div><div class="blur" style="left:636.2px;top:615.1px;width:10.5px;height:10.5px;background:#eaeaea"></div><div class="blur" style="left:646.5px;top:615.1px;width:10.5px;height:10.5px;background:#ececec"></div><div class="blur" style="left:656.7px;top:615.1px;width:10.5px;height:10.5px;background:#dfdfdf"></div><div class="blur" style="left:666.9px;top:615.1px;width:10.5px;height:10.5px;background:#eceeee"></div><div class="blur" style="left:615.8px;top:625.4px;width:10.5px;height:10.5px;background:#f0f0f0"></div><div class="blur" style="left:626.0px;top:625.4px;width:10.5px;height:10.5px;background:#ebebeb"></div><div class="blur" style="left:636.2px;top:625.4px;width:10.5px;height:10.5px;background:#f1f1f1"></div><div class="blur" style="left:646.5px;top:625.4px;width:10.5px;height:10.5px;background:#eeeeee"></div><div class="blur" style="left:656.7px;top:625.4px;width:10.5px;height:10.5px;background:#eeeeee"></div><div class="blur" style="left:666.9px;top:625.4px;width:10.5px;height:10.5px;background:#f5f5f5"></div>
<div class="vl" style="left:1520px;top:210px;height:41px;background:#9aa0a6"></div>
<svg class="abs" style="left:1556px;top:222px" width="22" height="16" viewBox="0 0 22 16"><path d="M3 12.5L11 4.5L19 12.5" fill="none" stroke="#5f6368" stroke-width="2.5"/></svg>

<!-- PURPLE HIGHLIGHT -->
<div class="abs" style="left:1357.6px;top:131.8px;width:149.3px;height:86px;background:#b083f6"></div>
<div class="abs" style="left:1357.6px;top:209px;width:151.3px;height:440px;background:#b083f6"></div>
<div class="abs" style="left:1366.9px;top:141.4px;width:130.6px;height:67.5px;background:#fff"></div>
<div class="abs" style="left:1369px;top:219px;width:128px;height:430px;background:#fff"></div>
<div class="abs" style="left:1369px;top:219px;width:128px;height:68px;background:#f8f9fa"></div>
<div class="hl" style="left:1369px;top:287px;width:128px"></div>
<div class="hl" style="left:1369px;top:379px;width:128px"></div>
<div class="hl" style="left:1369px;top:471px;width:128px"></div>
<div class="hl" style="left:1369px;top:563px;width:128px"></div>
<svg class="abs" style="left:1418px;top:166px" width="22" height="22" viewBox="0 0 22 22"><path d="M11 2V18 M3 10.5L11 18.5L19 10.5" fill="none" stroke="#5f6368" stroke-width="2"/></svg>

<!-- dashed underlines -->
<div class="abs" style="left:847.5px;top:115.2px;width:83.5px;height:1.8px;background:repeating-linear-gradient(90deg,#202124 0 3.1px,transparent 3.1px 4.9px)"></div>
<div class="abs" style="left:684px;top:240px;width:65px;height:1.4px;background:repeating-linear-gradient(90deg,#3573e2 0 3px,transparent 3px 4.9px)"></div>
<div id="TXTWRAP" style="position:absolute;left:0;top:0;width:1600px;height:649px;will-change:transform">
<div class="t" id="t0" style="left:141.33px;top:30.00px;font-size:17.8px;color:#202124;font-weight:normal;letter-spacing:0.843px;">Campaigns</div>
<div class="t" id="t1" style="left:141.33px;top:101.00px;font-size:17.8px;color:#202124;font-weight:normal;letter-spacing:0.893px;">Assets</div>
<div class="t" id="t2" style="left:140.93px;top:160.00px;font-size:17.8px;color:#2a5cc4;font-weight:normal;letter-spacing:0.757px;">Audiences, keywords, and</div>
<div class="t" id="t3" style="left:140.93px;top:186.00px;font-size:17.8px;color:#2a5cc4;font-weight:normal;letter-spacing:1.387px;">content</div>
<div class="t" id="t4" style="left:161.43px;top:245.00px;font-size:17.8px;color:#fff;font-weight:normal;letter-spacing:0.776px;-webkit-text-stroke:.35px #fff;">Search keywords</div>
<div class="t" id="t5" style="left:161.93px;top:316.00px;font-size:17.8px;color:#202124;font-weight:normal;letter-spacing:0.865px;">Audiences</div>
<div class="t" id="t6" style="left:161.93px;top:388.00px;font-size:17.8px;color:#202124;font-weight:normal;letter-spacing:0.923px;">Locations</div>
<div class="t" id="t7" style="left:161.93px;top:459.00px;font-size:17.8px;color:#202124;font-weight:normal;letter-spacing:1.108px;">Content</div>
<div class="t" id="t8" style="left:161.63px;top:531.00px;font-size:17.8px;color:#202124;font-weight:normal;letter-spacing:0.869px;">Ad schedule</div>
<div class="t" id="t9" style="left:161.63px;top:602.00px;font-size:17.8px;color:#202124;font-weight:normal;letter-spacing:0.892px;">Dynamic ad targets</div>
<div class="t" id="t10" style="left:26.80px;top:92.00px;font-size:15px;color:#5f6368;font-weight:normal;letter-spacing:0.511px;-webkit-text-stroke:.3px #5f6368;">Create</div>
<div class="t" id="t11" style="left:8.70px;top:190.00px;font-size:15px;color:#2a5cc4;font-weight:normal;letter-spacing:0.658px;-webkit-text-stroke:.55px #2a5cc4;">Campaigns</div>
<div class="t" id="t12" style="left:28.90px;top:277.00px;font-size:15px;color:#5f6368;font-weight:normal;letter-spacing:0.422px;-webkit-text-stroke:.3px #5f6368;">Goals</div>
<div class="t" id="t13" style="left:30.10px;top:363.00px;font-size:15px;color:#5f6368;font-weight:normal;letter-spacing:0.854px;-webkit-text-stroke:.3px #5f6368;">Tools</div>
<div class="t" id="t14" style="left:26.30px;top:450.00px;font-size:15px;color:#5f6368;font-weight:normal;letter-spacing:0.981px;-webkit-text-stroke:.3px #5f6368;">Billing</div>
<div class="t" id="t15" style="left:25.80px;top:538.00px;font-size:15px;color:#5f6368;font-weight:normal;letter-spacing:0.974px;-webkit-text-stroke:.3px #5f6368;">Admin</div>
<div class="t" id="t16" style="left:499.37px;top:24.00px;font-size:15.5px;color:#5f6368;font-weight:normal;letter-spacing:0.466px;">View (2 filters)</div>
<div class="t" id="t17" style="left:529.93px;top:47.00px;font-size:17.8px;color:#202124;font-weight:normal;letter-spacing:0.779px;text-decoration:underline;text-decoration-thickness:1.2px;text-underline-offset:2.6px;">All campaigns</div>
<div class="t" id="t18" style="left:731.87px;top:24.00px;font-size:15.5px;color:#5f6368;font-weight:normal;letter-spacing:0.238px;">Campaign</div>
<div class="t" id="t19" style="left:988.07px;top:26.00px;font-size:15.5px;color:#5f6368;font-weight:normal;letter-spacing:0.326px;">Ad groups (2)</div>
<div class="t" id="t20" style="left:987.93px;top:47.00px;font-size:17.8px;color:#202124;font-weight:normal;letter-spacing:0.681px;">Select an ad group</div>
<div class="t" id="t21" style="left:530.02px;top:98.00px;font-size:16.4px;color:#202124;font-weight:normal;letter-spacing:0.062px;">Paused</div>
<div class="t" id="t22" style="left:651.12px;top:98.00px;font-size:16.4px;color:#5f6368;font-weight:normal;letter-spacing:-0.125px;">Type:</div>
<div class="t" id="t23" style="left:694.02px;top:98.00px;font-size:16.4px;color:#202124;font-weight:normal;letter-spacing:-0.028px;">Search</div>
<div class="t" id="t24" style="left:786.22px;top:98.00px;font-size:16.4px;color:#5f6368;font-weight:normal;letter-spacing:0.050px;">Budget:</div>
<div class="t" id="t25" style="left:846.62px;top:98.00px;font-size:16.4px;color:#202124;font-weight:normal;letter-spacing:0.384px;">$19.30/day</div>
<div class="t" id="t26" style="left:1038.23px;top:98.00px;font-size:17.8px;color:#b3b6ba;font-weight:normal;letter-spacing:0.568px;-webkit-text-stroke:.2px #b3b6ba;">Simulate campaign changes</div>
<div class="t" id="t27" style="left:1336.68px;top:98.00px;font-size:17.8px;color:#2a5cc4;font-weight:normal;letter-spacing:0.747px;">Campaign settings</div>
<div class="t" id="t28" style="left:503.83px;top:155.00px;font-size:17.8px;color:#2a5cc4;font-weight:normal;letter-spacing:0.670px;">Search keywords</div>
<div class="t" id="t29" style="left:690.53px;top:156.00px;font-size:17.8px;color:#5f6368;font-weight:normal;letter-spacing:0.675px;">Negative search keywords</div>
<div class="t" id="t30" style="left:683.21px;top:222.00px;font-size:16.5px;color:#2f6fe0;font-weight:normal;letter-spacing:0.088px;">+ 1 more</div>
<div class="t" id="t31" style="left:764.13px;top:223.00px;font-size:17.8px;color:#3c4043;font-weight:normal;letter-spacing:0.996px;">Add filter</div>
<div class="t" id="t32" style="left:905.39px;top:241.00px;font-size:15.2px;color:#5f6368;font-weight:normal;letter-spacing:0.283px;-webkit-text-stroke:.3px #5f6368;">Search</div>
<div class="t" id="t33" style="left:990.69px;top:241.00px;font-size:15.2px;color:#5f6368;font-weight:normal;letter-spacing:0.490px;-webkit-text-stroke:.3px #5f6368;">Segment</div>
<div class="t" id="t34" style="left:1085.59px;top:241.00px;font-size:15.2px;color:#5f6368;font-weight:normal;letter-spacing:0.584px;-webkit-text-stroke:.3px #5f6368;">Columns</div>
<div class="t" id="t35" style="left:1179.79px;top:241.00px;font-size:15.2px;color:#5f6368;font-weight:normal;letter-spacing:0.591px;-webkit-text-stroke:.3px #5f6368;">Reports</div>
<div class="t" id="t36" style="left:1267.29px;top:241.00px;font-size:15.2px;color:#5f6368;font-weight:normal;letter-spacing:0.522px;-webkit-text-stroke:.3px #5f6368;">Download</div>
<div class="t" id="t37" style="left:616.79px;top:288.00px;font-size:15.2px;color:#202124;font-weight:normal;letter-spacing:0.133px;-webkit-text-stroke:.3px #202124;">Keyword</div>
<div class="abs" style="left:0;top:0;width:864px;height:649px;overflow:hidden"><div class="t" id="t38" style="left:782.79px;top:288.00px;font-size:15.2px;color:#202124;font-weight:normal;letter-spacing:0.200px;-webkit-text-stroke:.3px #202124;">Conversions</div></div>
<div class="t" id="t39" style="left:923.89px;top:279.00px;font-size:15.2px;color:#202124;font-weight:normal;letter-spacing:0.459px;-webkit-text-stroke:.3px #202124;">Cost /</div>
<div class="t" id="t40" style="left:930.09px;top:297.00px;font-size:15.2px;color:#202124;font-weight:normal;letter-spacing:0.207px;-webkit-text-stroke:.3px #202124;">conv.</div>
<div class="t" id="t41" style="left:987.29px;top:288.00px;font-size:15.2px;color:#202124;font-weight:normal;letter-spacing:-0.323px;-webkit-text-stroke:.3px #202124;">Final URL</div>
<div class="t" id="t42" style="left:1240.79px;top:288.00px;font-size:15.2px;color:#202124;font-weight:normal;letter-spacing:0.337px;-webkit-text-stroke:.3px #202124;">Clicks</div>
<div class="abs" style="left:0;top:0;width:1358px;height:649px;overflow:hidden"><div class="t" id="t43" style="left:1350.49px;top:288.00px;font-size:15.2px;color:#202124;font-weight:normal;letter-spacing:0.172px;-webkit-text-stroke:.3px #202124;">Impr.</div></div>
<div class="t" id="t44" style="left:1525.49px;top:288.00px;font-size:15.2px;color:#202124;font-weight:normal;letter-spacing:-0.273px;-webkit-text-stroke:.3px #202124;">Avg. CPC</div>
<div class="t" id="t45" style="left:515.10px;top:344.00px;font-size:15px;color:#3c4043;font-weight:normal;letter-spacing:-0.047px;">Total: Keywords in your curren…</div>
<div class="t" id="t46" style="left:796.10px;top:344.00px;font-size:15px;color:#3c4043;font-weight:normal;letter-spacing:0.174px;">41,684.00</div>
<div class="t" id="t47" style="left:927.60px;top:344.00px;font-size:15px;color:#3c4043;font-weight:normal;letter-spacing:0.231px;">$0.22</div>
<div class="t" id="t48" style="left:1236.80px;top:344.00px;font-size:15px;color:#3c4043;font-weight:normal;letter-spacing:0.102px;">81,228</div>
<div class="abs" style="left:0;top:0;width:1358px;height:649px;overflow:hidden"><div class="t" id="t49" style="left:1319.30px;top:344.00px;font-size:15px;color:#3c4043;font-weight:normal;letter-spacing:-0.448px;">1,269,126</div></div>
<div class="t" id="t50" style="left:1550.70px;top:345.00px;font-size:15px;color:#3c4043;font-weight:normal;letter-spacing:0.393px;">$0.11</div>
<div class="t" id="t51" style="left:833.60px;top:404.00px;font-size:15px;color:#3c4043;font-weight:normal;letter-spacing:0.374px;">1.00</div>
<div class="t" id="t52" style="left:927.40px;top:404.00px;font-size:15px;color:#3c4043;font-weight:normal;letter-spacing:0.291px;">$0.17</div>
<div class="t" id="t53" style="left:988.30px;top:403.00px;font-size:15px;color:#3c4043;font-weight:normal;letter-spacing:0.000px;">—</div>
<div class="t" id="t54" style="left:1274.60px;top:404.00px;font-size:15px;color:#3c4043;font-weight:normal;letter-spacing:0.000px;">1</div>
<div class="t" id="t55" style="left:1550.70px;top:404.00px;font-size:15px;color:#3c4043;font-weight:normal;letter-spacing:0.171px;">$0.17</div>
<div class="t" id="t56" style="left:833.60px;top:472.00px;font-size:15px;color:#3c4043;font-weight:normal;letter-spacing:0.374px;">1.00</div>
<div class="t" id="t57" style="left:927.40px;top:472.00px;font-size:15px;color:#3c4043;font-weight:normal;letter-spacing:0.513px;">$0.11</div>
<div class="t" id="t58" style="left:988.30px;top:471.00px;font-size:15px;color:#3c4043;font-weight:normal;letter-spacing:0.000px;">—</div>
<div class="t" id="t59" style="left:1274.60px;top:472.00px;font-size:15px;color:#3c4043;font-weight:normal;letter-spacing:0.000px;">1</div>
<div class="t" id="t60" style="left:1550.70px;top:472.00px;font-size:15px;color:#3c4043;font-weight:normal;letter-spacing:0.393px;">$0.11</div>
<div class="t" id="t61" style="left:833.60px;top:540.00px;font-size:15px;color:#3c4043;font-weight:normal;letter-spacing:0.374px;">1.00</div>
<div class="t" id="t62" style="left:927.40px;top:540.00px;font-size:15px;color:#3c4043;font-weight:normal;letter-spacing:0.291px;">$0.06</div>
<div class="t" id="t63" style="left:988.30px;top:539.00px;font-size:15px;color:#3c4043;font-weight:normal;letter-spacing:0.000px;">—</div>
<div class="t" id="t64" style="left:1274.60px;top:540.00px;font-size:15px;color:#3c4043;font-weight:normal;letter-spacing:0.000px;">1</div>
<div class="t" id="t65" style="left:1550.70px;top:540.00px;font-size:15px;color:#3c4043;font-weight:normal;letter-spacing:0.171px;">$0.06</div>
<div class="t" id="t66" style="left:833.60px;top:608.00px;font-size:15px;color:#3c4043;font-weight:normal;letter-spacing:0.374px;">0.00</div>
<div class="t" id="t67" style="left:927.40px;top:608.00px;font-size:15px;color:#3c4043;font-weight:normal;letter-spacing:0.291px;">$0.00</div>
<div class="t" id="t68" style="left:988.30px;top:607.00px;font-size:15px;color:#3c4043;font-weight:normal;letter-spacing:0.000px;">—</div>
<div class="t" id="t69" style="left:1274.60px;top:608.00px;font-size:15px;color:#3c4043;font-weight:normal;letter-spacing:0.000px;">1</div>
<div class="t" id="t70" style="left:1550.70px;top:608.00px;font-size:15px;color:#3c4043;font-weight:normal;letter-spacing:0.171px;">$0.05</div>
<div class="t" id="t71" style="left:1447.80px;top:165.00px;font-size:20px;color:#3c4043;font-weight:bold;letter-spacing:0.097px;">CTR</div>
<div class="t" id="t72" style="left:1433.36px;top:242.00px;font-size:19px;color:#5f6368;font-weight:normal;letter-spacing:0.381px;">6.40%</div>
<div class="t" id="t73" style="left:1409.00px;top:323.00px;font-size:20px;color:#5f6368;font-weight:normal;letter-spacing:0.176px;">100.00%</div>
<div class="t" id="t74" style="left:1420.20px;top:415.00px;font-size:20px;color:#5f6368;font-weight:normal;letter-spacing:0.143px;">50.00%</div>
<div class="t" id="t75" style="left:1420.20px;top:507.00px;font-size:20px;color:#5f6368;font-weight:normal;letter-spacing:0.143px;">50.00%</div>
<div class="t" id="t76" style="left:1420.20px;top:599.00px;font-size:20px;color:#5f6368;font-weight:normal;letter-spacing:0.143px;">50.00%</div>
</div>
</div></body></html>
